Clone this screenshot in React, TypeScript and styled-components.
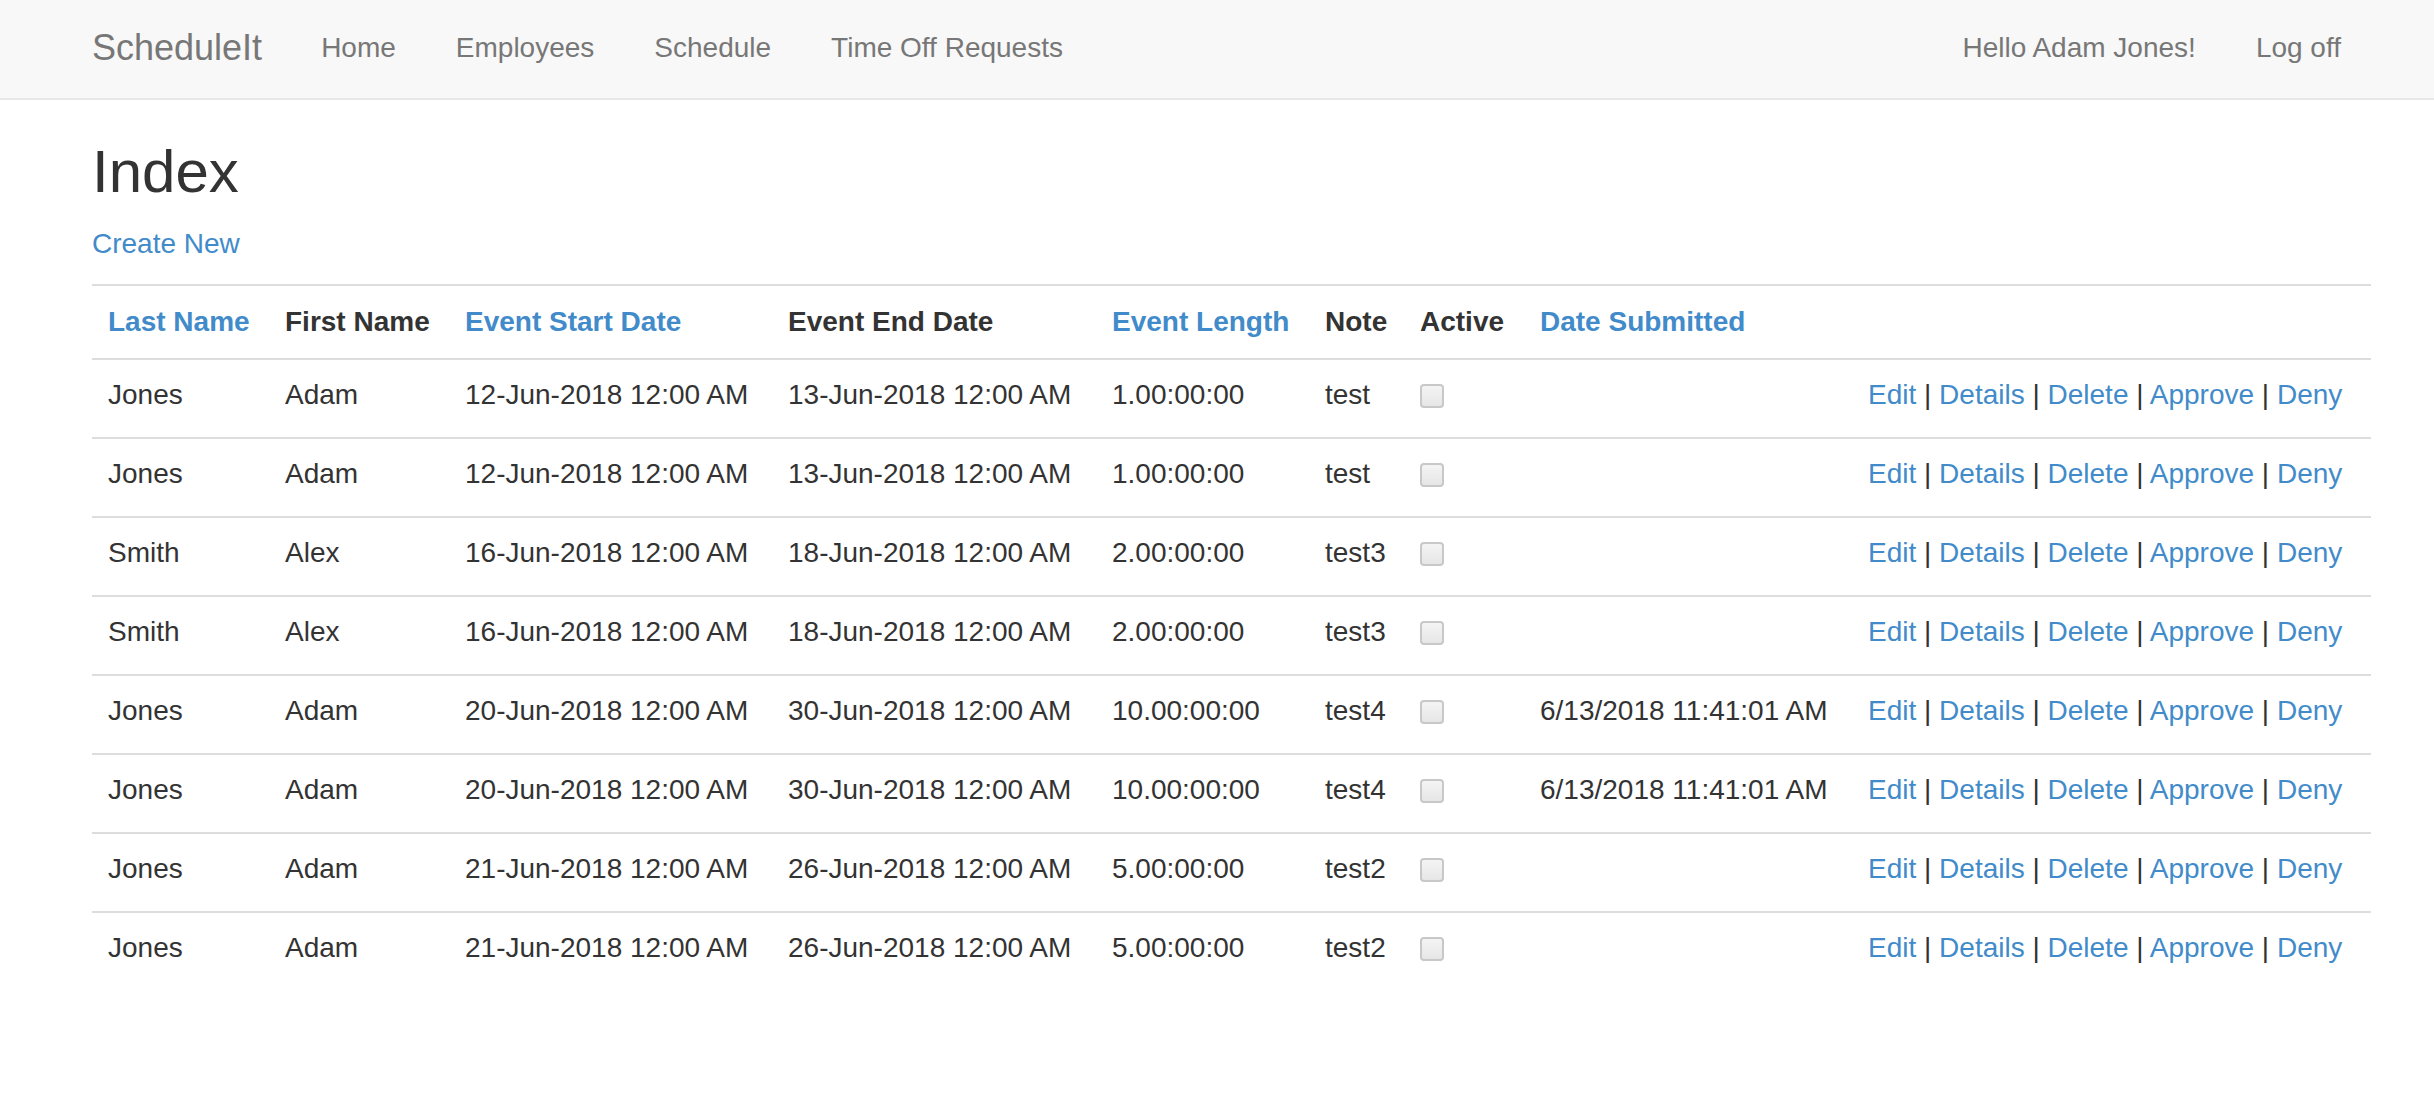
import React from "react";
import styled, { createGlobalStyle } from "styled-components";

const GlobalStyle = createGlobalStyle`
  html, body {
    margin: 0;
    padding: 0;
    background: #fff;
  }
  body {
    font-family: "Liberation Sans", Arial, Helvetica, sans-serif;
    font-size: 28px;
    line-height: 40px;
    color: #333;
  }
  * { box-sizing: border-box; }
`;

const Navbar = styled.nav`
  display: flex;
  align-items: center;
  height: 100px;
  padding: 0 63px 2px 92px;
  background: #f8f8f8;
  border-bottom: 2px solid #e7e7e7;
`;

const Brand = styled.a`
  font-size: 36px;
  line-height: 40px;
  color: #777;
  text-decoration: none;
  padding-right: 29px;
`;

const NavList = styled.ul<{ $right?: boolean }>`
  display: flex;
  list-style: none;
  margin: 0;
  margin-left: ${(p) => (p.$right ? "auto" : "0")};
  padding: 0;
`;

const NavLink = styled.a`
  display: block;
  padding: 0 30px;
  color: #777;
  text-decoration: none;
  line-height: 40px;
  white-space: nowrap;
`;

const Main = styled.main`
  padding: 39px 63px 0 92px;
`;

const Title = styled.h2`
  font-size: 60px;
  font-weight: 500;
  line-height: 66px;
  margin: 0 0 19px;
  color: #333;
`;

const Para = styled.p`
  margin: 0 0 20px;
`;

const Link = styled.a`
  color: #428bca;
  text-decoration: none;
`;

const Table = styled.table`
  width: 100%;
  border-collapse: collapse;
  table-layout: fixed;
`;

const Col = styled.col<{ $w: number }>`
  width: ${(p) => p.$w}px;
`;

const Th = styled.th`
  text-align: left;
  font-weight: bold;
  padding: 16px;
  line-height: 40px;
  border-top: 2px solid #ddd;
  vertical-align: bottom;
  white-space: nowrap;
`;

const Td = styled.td`
  padding: 15px 16px 22px;
  line-height: 40px;
  border-top: 2px solid #ddd;
  vertical-align: top;
  white-space: nowrap;
`;

const HeadLink = styled.a`
  color: #428bca;
  text-decoration: none;
`;

const Check = styled.input`
  appearance: none;
  -webkit-appearance: none;
  display: inline-block;
  vertical-align: top;
  width: 24px;
  height: 24px;
  margin: 9px 0 0;
  border: 2px solid #c8c8c8;
  border-radius: 4px;
  background: linear-gradient(#f4f4f4, #e6e6e6);
`;

const Sep = styled.span`
  color: #333;
`;

type Row = {
  last: string;
  first: string;
  start: string;
  end: string;
  length: string;
  note: string;
  submitted: string;
};

const rows: Row[] = [
  { last: "Jones", first: "Adam", start: "12-Jun-2018 12:00 AM", end: "13-Jun-2018 12:00 AM", length: "1.00:00:00", note: "test", submitted: "" },
  { last: "Jones", first: "Adam", start: "12-Jun-2018 12:00 AM", end: "13-Jun-2018 12:00 AM", length: "1.00:00:00", note: "test", submitted: "" },
  { last: "Smith", first: "Alex", start: "16-Jun-2018 12:00 AM", end: "18-Jun-2018 12:00 AM", length: "2.00:00:00", note: "test3", submitted: "" },
  { last: "Smith", first: "Alex", start: "16-Jun-2018 12:00 AM", end: "18-Jun-2018 12:00 AM", length: "2.00:00:00", note: "test3", submitted: "" },
  { last: "Jones", first: "Adam", start: "20-Jun-2018 12:00 AM", end: "30-Jun-2018 12:00 AM", length: "10.00:00:00", note: "test4", submitted: "6/13/2018 11:41:01 AM" },
  { last: "Jones", first: "Adam", start: "20-Jun-2018 12:00 AM", end: "30-Jun-2018 12:00 AM", length: "10.00:00:00", note: "test4", submitted: "6/13/2018 11:41:01 AM" },
  { last: "Jones", first: "Adam", start: "21-Jun-2018 12:00 AM", end: "26-Jun-2018 12:00 AM", length: "5.00:00:00", note: "test2", submitted: "" },
  { last: "Jones", first: "Adam", start: "21-Jun-2018 12:00 AM", end: "26-Jun-2018 12:00 AM", length: "5.00:00:00", note: "test2", submitted: "" },
];

const colWidths = [177, 180, 323, 324, 213, 95, 120, 328, 519];

const actions = ["Edit", "Details", "Delete", "Approve", "Deny"];

export default function App() {
  return (
    <>
      <GlobalStyle />
      <Navbar>
        <Brand href="#">ScheduleIt</Brand>
        <NavList>
          <li><NavLink href="#">Home</NavLink></li>
          <li><NavLink href="#">Employees</NavLink></li>
          <li><NavLink href="#">Schedule</NavLink></li>
          <li><NavLink href="#">Time Off Requests</NavLink></li>
        </NavList>
        <NavList $right>
          <li><NavLink href="#">Hello Adam Jones!</NavLink></li>
          <li><NavLink href="#">Log off</NavLink></li>
        </NavList>
      </Navbar>
      <Main>
        <Title>Index</Title>
        <Para>
          <Link href="#">Create New</Link>
        </Para>
        <Table>
          <colgroup>
            {colWidths.map((w, i) => (
              <Col key={i} $w={w} />
            ))}
          </colgroup>
          <tbody>
            <tr>
              <Th><HeadLink href="#">Last Name</HeadLink></Th>
              <Th>First Name</Th>
              <Th><HeadLink href="#">Event Start Date</HeadLink></Th>
              <Th>Event End Date</Th>
              <Th><HeadLink href="#">Event Length</HeadLink></Th>
              <Th>Note</Th>
              <Th>Active</Th>
              <Th><HeadLink href="#">Date Submitted</HeadLink></Th>
              <Th></Th>
            </tr>
            {rows.map((r, i) => (
              <tr key={i}>
                <Td>{r.last}</Td>
                <Td>{r.first}</Td>
                <Td>{r.start}</Td>
                <Td>{r.end}</Td>
                <Td>{r.length}</Td>
                <Td>{r.note}</Td>
                <Td>
                  <Check type="checkbox" disabled defaultChecked={false} />
                </Td>
                <Td>{r.submitted}</Td>
                <Td>
                  {actions.map((a, j) => (
                    <React.Fragment key={a}>
                      {j > 0 && <Sep> | </Sep>}
                      <Link href="#">{a}</Link>
                    </React.Fragment>
                  ))}
                </Td>
              </tr>
            ))}
          </tbody>
        </Table>
      </Main>
    </>
  );
}
